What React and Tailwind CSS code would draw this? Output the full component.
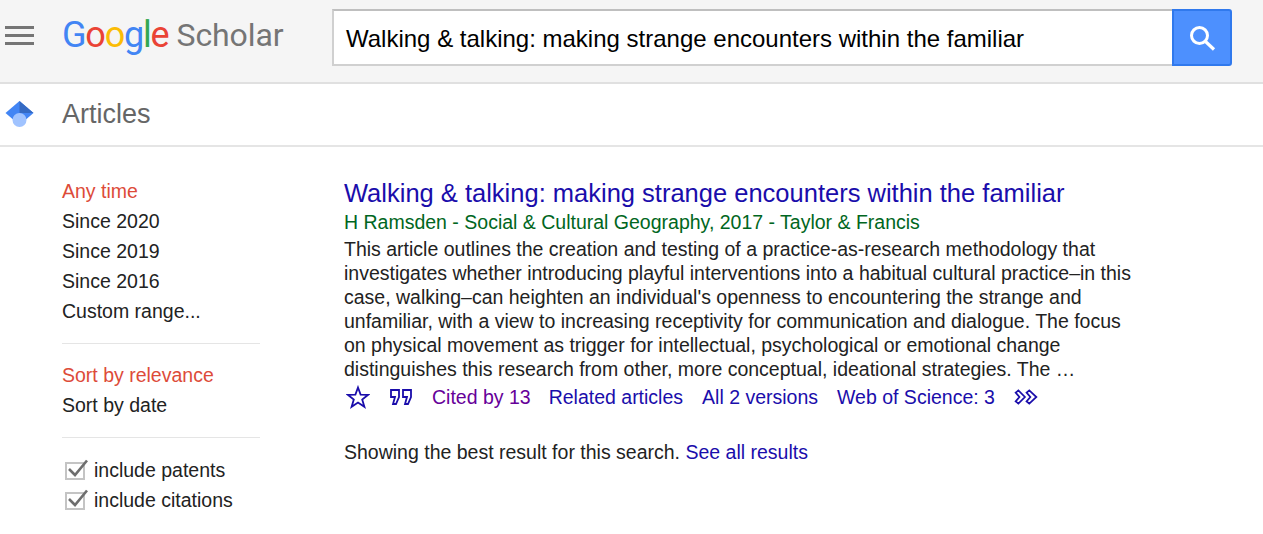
const A = 'font-["Liberation_Sans",Arial,sans-serif]'

function SearchIcon() {
  return (
    <svg width="32" height="32" viewBox="0 0 32 32" fill="none" stroke="#fff" strokeWidth="3">
      <circle cx="13.5" cy="13.5" r="8" />
      <path d="M19.5 19.5 L28 27.5" strokeWidth="3.2" />
    </svg>
  )
}

function CheckBox() {
  return (
    <svg width="24" height="24" viewBox="0 0 24 24" fill="none" className="shrink-0 ml-[2px]">
      <rect x="2" y="5" width="18" height="16" fill="#fff" stroke="#c4c4c4" strokeWidth="2" />
      <path d="M5 11 L11 17 L23 2.5" stroke="#6e6e6e" strokeWidth="2.6" />
    </svg>
  )
}

function SideLink({ active, children }) {
  return <div className={`h-[30px] leading-[30px] ${active ? 'text-[#dd4b39]' : 'text-[#222]'}`}>{children}</div>
}

export default function App() {
  return (
    <div className={`h-[534px] bg-white overflow-hidden text-[19.5px] ${A}`}>
      {/* Top bar */}
      <header className="h-[84px] bg-[#f5f5f5] border-b-2 border-[#e0e0e0] flex items-start">
        <div className="w-[62px] pt-[26px] pl-[5px]">
          <div className="w-[29px] h-[19px] flex flex-col justify-between">
            <div className="h-[3px] bg-[#757575]" />
            <div className="h-[3px] bg-[#757575]" />
            <div className="h-[3px] bg-[#757575]" />
          </div>
        </div>
        <div className="w-[270px] h-[70px] flex items-center text-[36px] tracking-[-1.2px] font-['Roboto',sans-serif] pb-[1px]">
          <span className="text-[#4285f4]">G</span>
          <span className="text-[#ea4335]">o</span>
          <span className="text-[#fbbc05]">o</span>
          <span className="text-[#4285f4]">g</span>
          <span className="text-[#34a853]">l</span>
          <span className="text-[#ea4335]">e</span>
          <span className="text-[#757575] ml-[8px] text-[32px] tracking-[-0.1px]">Scholar</span>
        </div>
        <div className="mt-[9px] flex h-[57px] w-[900px]">
          <div className="flex-1 bg-white border-2 border-[#d0d0d0] border-t-[#bfbfbf] border-r-0 pl-[12px] pt-[2px] flex items-center text-[24px] text-black">
            Walking &amp; talking: making strange encounters within the familiar
          </div>
          <div className="w-[60px] bg-[#4d90fe] border-2 border-[#3079ed] rounded-r-[3px] flex items-center justify-center">
            <SearchIcon />
          </div>
        </div>
      </header>

      {/* Sub bar */}
      <div className="h-[63px] border-b-2 border-[#e5e5e5] flex items-center">
        <div className="w-[62px] pl-[5px]">
          <svg width="29" height="28" viewBox="0 0 29 28">
            <path d="M14.5 0 L28.5 12 L14.5 24 L0.5 12 Z" fill="#4285f4" />
            <path d="M14.5 0 L28.5 12 L14.5 12 Z" fill="#356ac3" />
            <circle cx="14.5" cy="19" r="7" fill="#a0c3ff" />
          </svg>
        </div>
        <span className="text-[27px] text-[#666]">Articles</span>
      </div>

      <div className="flex">
        {/* Sidebar */}
        <aside className="w-[198px] ml-[62px] pt-[29px] shrink-0">
          <SideLink active>Any time</SideLink>
          <SideLink>Since 2020</SideLink>
          <SideLink>Since 2019</SideLink>
          <SideLink>Since 2016</SideLink>
          <SideLink>Custom range...</SideLink>
          <div className="h-px bg-[#e5e5e5] mt-[17px] mb-[16px]" />
          <SideLink active>Sort by relevance</SideLink>
          <SideLink>Sort by date</SideLink>
          <div className="h-px bg-[#e5e5e5] mt-[17px] mb-[17px]" />
          <div className="flex items-center gap-[6px] h-[30px] text-[#222]"><CheckBox /><span className="pt-[2px]">include patents</span></div>
          <div className="flex items-center gap-[6px] h-[30px] text-[#222]"><CheckBox /><span className="pt-[2px]">include citations</span></div>
        </aside>

        {/* Result */}
        <main className="ml-[84px] w-[800px] pt-[29px]">
          <div className="text-[25.5px] leading-[34px] text-[#1a0dab] whitespace-nowrap">Walking &amp; talking: making strange encounters within the familiar</div>
          <div className="leading-[24px] h-[27px] text-[#006621] whitespace-nowrap">H Ramsden - Social &amp; Cultural Geography, 2017 - Taylor &amp; Francis</div>
          <div className="leading-[24px] text-[#222] whitespace-nowrap">
            <div>This article outlines the creation and testing of a practice-as-research methodology that</div>
            <div>investigates whether introducing playful interventions into a habitual cultural practice–in this</div>
            <div>case, walking–can heighten an individual's openness to encountering the strange and</div>
            <div>unfamiliar, with a view to increasing receptivity for communication and dialogue. The focus</div>
            <div>on physical movement as trigger for intellectual, psychological or emotional change</div>
            <div>distinguishes this research from other, more conceptual, ideational strategies. The …</div>
          </div>
          <div className="flex items-center h-[30px] mt-[1px] text-[#1a0dab] whitespace-nowrap">
            <svg width="24" height="24" viewBox="0 0 24 24" fill="none" stroke="#1a0dab" strokeWidth="1.8" className="ml-[2px] mr-[19px]">
              <path d="M12 2.5 L14.6 9.6 L22.2 9.8 L16.2 14.5 L18.4 21.8 L12 17.5 L5.6 21.8 L7.8 14.5 L1.8 9.8 L9.4 9.6 Z" />
            </svg>
            <svg width="24" height="20" viewBox="0 0 24 20" fill="none" stroke="#1a0dab" strokeWidth="1.8" className="mr-[19px]">
              <path d="M2 3 H10 V10 L7 17 H4 L6 10 H2 Z M14 3 H22 V10 L19 17 H16 L18 10 H14 Z" />
            </svg>
            <span className="text-[#660099] mr-[18px] pt-[2px]">Cited by 13</span>
            <span className="mr-[19px] pt-[2px]">Related articles</span>
            <span className="mr-[19px] pt-[2px]">All 2 versions</span>
            <span className="mr-[19px] pt-[2px]">Web of Science: 3</span>
            <svg width="24" height="16" viewBox="0 0 22 14" fill="none" stroke="#1a0dab" strokeWidth="1.6">
              <path d="M1.5 3 L4 1 L10 7 L4 13 L1.5 11 L5 7 Z M11.5 3 L14 1 L20.5 7 L14 13 L11.5 11 L15 7 Z" />
            </svg>
          </div>
          <div className="mt-[25px] leading-[30px] text-[#222] whitespace-nowrap">
            Showing the best result for this search. <span className="text-[#1a0dab]">See all results</span>
          </div>
        </main>
      </div>
    </div>
  )
}
